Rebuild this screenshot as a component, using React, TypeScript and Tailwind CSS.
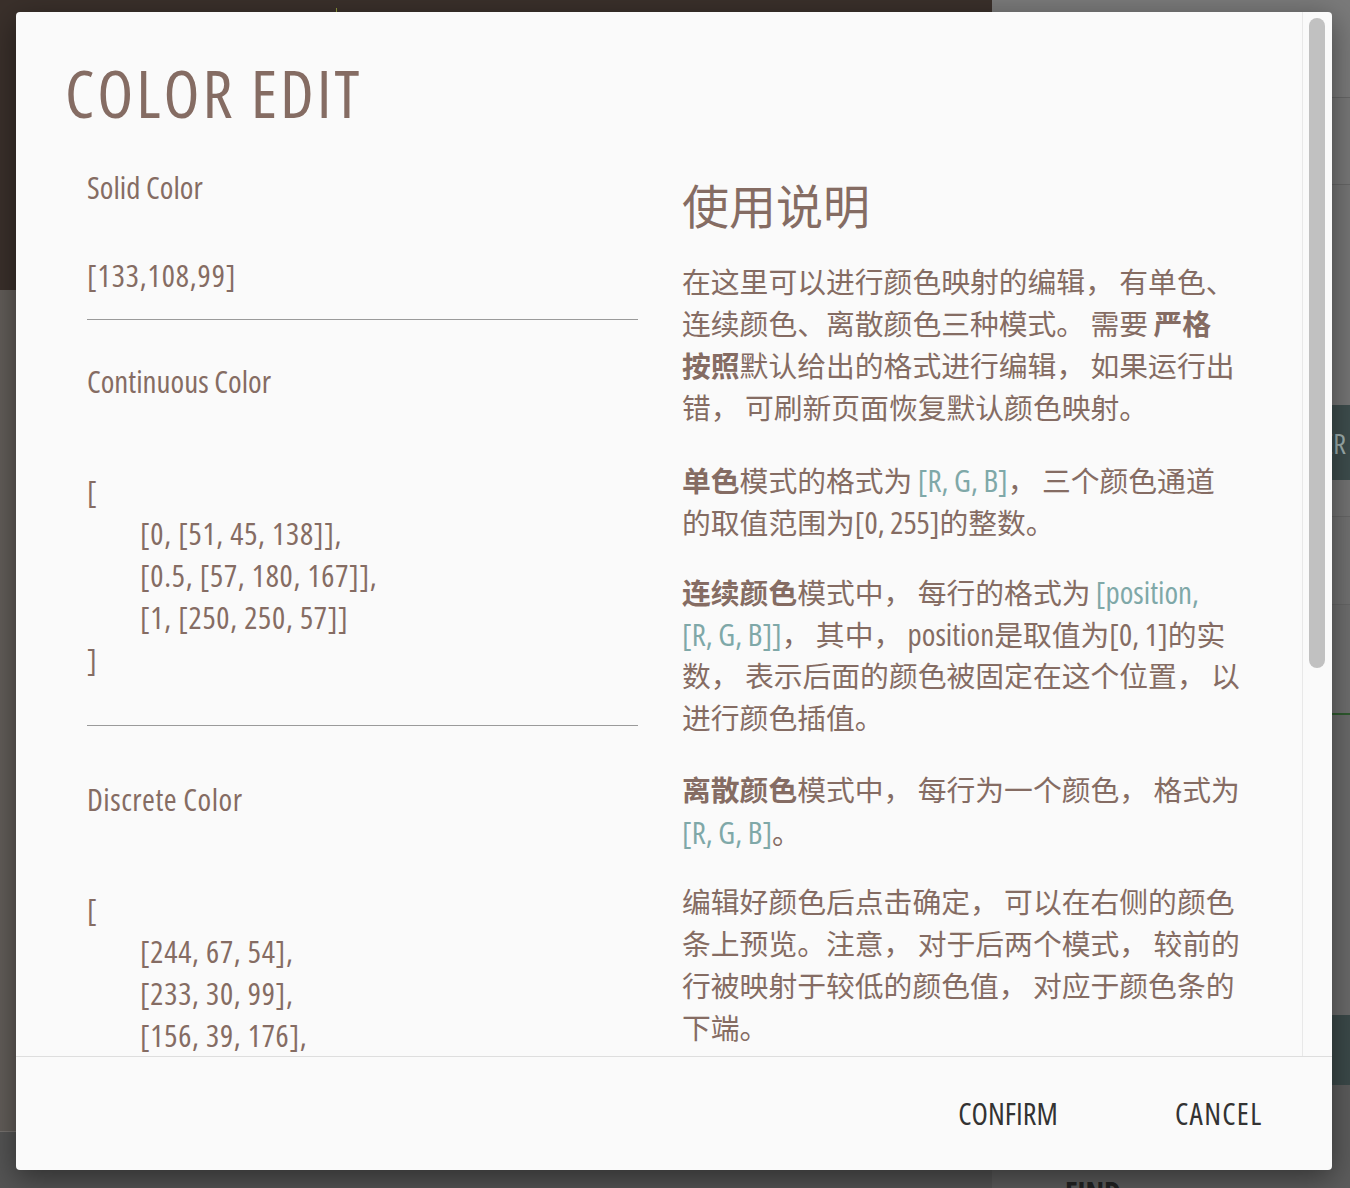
import React from "react";

const L = ({ children }: { children: React.ReactNode }) => (
  <span className="text-[31px]">{children}</span>
);

const Teal = ({ children }: { children: React.ReactNode }) => (
  <span className="text-[31px] text-[#7fa8a8]">{children}</span>
);

const B = ({ children }: { children: React.ReactNode }) => (
  <span className="font-bold">{children}</span>
);

const Line = ({ children }: { children?: React.ReactNode }) => (
  <div className="h-[42px] whitespace-nowrap leading-[42px]">{children}</div>
);

const Num = ({ children }: { children?: React.ReactNode }) => (
  <div className="h-[42px] whitespace-nowrap leading-[42px] tracking-[0.7px]">{children}</div>
);

export default function App() {
  return (
    <div className="relative h-[1188px] w-[1350px] overflow-hidden bg-[#4f4f4f] font-['Open_Sans','Noto_Sans_CJK_SC',sans-serif] font-stretch-75%">
      {/* background application */}
      <div className="flex h-full">
        <div className="flex w-[992px] flex-col">
          <div className="h-[290px] shrink-0 bg-[#3a302b]">
            <div className="ml-[336px] mt-[8px] h-[4px] w-px bg-[#8f9a3c]" />
          </div>
          <div className="h-[841px] shrink-0 bg-[#625d59]" />
          <div className="h-px shrink-0 bg-[#777370]" />
          <div className="min-h-0 flex-1 bg-[#545454]" />
        </div>
        <div className="flex flex-1 flex-col bg-[#6a6a6a]">
          <div className="h-[98px] shrink-0 border-b border-[#666] bg-[#7a7a7a]" />
          <div className="h-[87px] shrink-0 border-b border-[#666] bg-[#777]" />
          <div className="h-[220px] shrink-0 bg-[#757575]" />
          <div className="flex h-[75px] shrink-0 items-center justify-end bg-[#3e4d4d] pr-[4px] text-[28px] text-[#9fb0b0]">
            FILTER
          </div>
          <div className="h-[37px] shrink-0 border-b border-[#666] bg-[#737373]" />
          <div className="h-[88px] shrink-0 border-b border-[#666] bg-[#717171]" />
          <div className="h-[110px] shrink-0 border-b-2 border-[#2e5a2e] bg-[#6e6e6e]" />
          <div className="h-[300px] shrink-0 bg-[#6a6a6a]" />
          <div className="h-[70px] shrink-0 rounded-l bg-[#3b4949]" />
          <div className="min-h-0 flex-1 overflow-hidden bg-[#5c5c5c] pl-[73px] pt-[90px] text-[30px] font-bold leading-[36px] text-[#222]">
            FIND
          </div>
        </div>
      </div>

      {/* dialog overlay */}
      <div className="absolute inset-0 pl-[16px] pt-[12px]">
        <div className="flex h-[1158px] w-[1316px] flex-col overflow-hidden rounded-[4px] bg-[#fafafa] shadow-[0_8px_30px_rgba(0,0,0,0.45)]">
          <div className="flex h-[1044px]">
            <div className="flex-1 overflow-hidden text-[28.8px] text-[#856c63]">
              <div className="pl-[49px] pt-[47px] text-[66px] leading-[66px] tracking-[3px]">COLOR EDIT</div>
              <div className="flex gap-[44px] pl-[71px]">
                {/* left column: editors */}
                <div className="flex w-[551px] shrink-0 flex-col text-[31px]">
                  <div className="mt-[41px] h-[42px] leading-[42px]">Solid Color</div>
                  <div className="mt-[46px] h-[42px] leading-[42px] tracking-[0.9px]">[133,108,99]</div>
                  <div className="mt-[23px] h-px bg-[#9a9a9a]" />

                  <div className="mt-[40px] h-[42px] leading-[42px]">Continuous Color</div>
                  <div className="mt-[68px] flex flex-col">
                    <Num>[</Num>
                    <div className="pl-[53px]">
                      <Num>[0, [51, 45, 138]],</Num>
                      <Num>[0.5, [57, 180, 167]],</Num>
                      <Num>[1, [250, 250, 57]]</Num>
                    </div>
                    <Num>]</Num>
                  </div>
                  <div className="mt-[45px] h-px bg-[#9a9a9a]" />

                  <div className="mt-[52px] h-[42px] leading-[42px] tracking-[0.5px]">Discrete Color</div>
                  <div className="mt-[68px] flex flex-col">
                    <Num>[</Num>
                    <div className="pl-[53px]">
                      <Num>[244, 67, 54],</Num>
                      <Num>[233, 30, 99],</Num>
                      <Num>[156, 39, 176],</Num>
                    </div>
                  </div>
                </div>

                {/* right column: instructions */}
                <div className="flex w-[580px] shrink-0 flex-col">
                  <div className="mt-[53px] h-[56px] text-[47px] leading-[56px]">使用说明</div>

                  <div className="mt-[27px]">
                    <Line>在这里可以进行颜色映射的编辑， 有单色、</Line>
                    <Line>
                      连续颜色、离散颜色三种模式。 需要 <B>严格</B>
                    </Line>
                    <Line>
                      <B>按照</B>默认给出的格式进行编辑， 如果运行出
                    </Line>
                    <Line>错， 可刷新页面恢复默认颜色映射。</Line>
                  </div>

                  <div className="mt-[30px]">
                    <Line>
                      <B>单色</B>模式的格式为 <Teal>[R, G, B]</Teal>， 三个颜色通道
                    </Line>
                    <Line>
                      的取值范围为<L>[0, 255]</L>的整数。
                    </Line>
                  </div>

                  <div className="mt-[28px]">
                    <Line>
                      <B>连续颜色</B>模式中， 每行的格式为 <Teal>[position,</Teal>
                    </Line>
                    <Line>
                      <Teal>[R, G, B]]</Teal>， 其中， <L>position</L>是取值为<L>[0, 1]</L>的实
                    </Line>
                    <Line>数， 表示后面的颜色被固定在这个位置， 以</Line>
                    <Line>进行颜色插值。</Line>
                  </div>

                  <div className="mt-[30px]">
                    <Line>
                      <B>离散颜色</B>模式中， 每行为一个颜色， 格式为
                    </Line>
                    <Line>
                      <Teal>[R, G, B]</Teal>。
                    </Line>
                  </div>

                  <div className="mt-[28px]">
                    <Line>编辑好颜色后点击确定， 可以在右侧的颜色</Line>
                    <Line>条上预览。注意， 对于后两个模式， 较前的</Line>
                    <Line>行被映射于较低的颜色值， 对应于颜色条的</Line>
                    <Line>下端。</Line>
                  </div>
                </div>
              </div>
            </div>

            {/* scrollbar */}
            <div className="w-[30px] shrink-0 border-l border-[#e8e8e8] pl-[6px] pt-[6px]">
              <div className="h-[650px] w-[16px] rounded-full bg-[#c1c1c1]" />
            </div>
          </div>

          {/* footer */}
          <div className="flex flex-1 items-center justify-end gap-[117px] border-t border-[#dedede] pr-[70px] text-[30px] text-[#333]">
            <button className="w-[100px] text-center">CONFIRM</button>
            <button className="w-[87px] text-center tracking-[1.3px]">CANCEL</button>
          </div>
        </div>
      </div>
    </div>
  );
}
